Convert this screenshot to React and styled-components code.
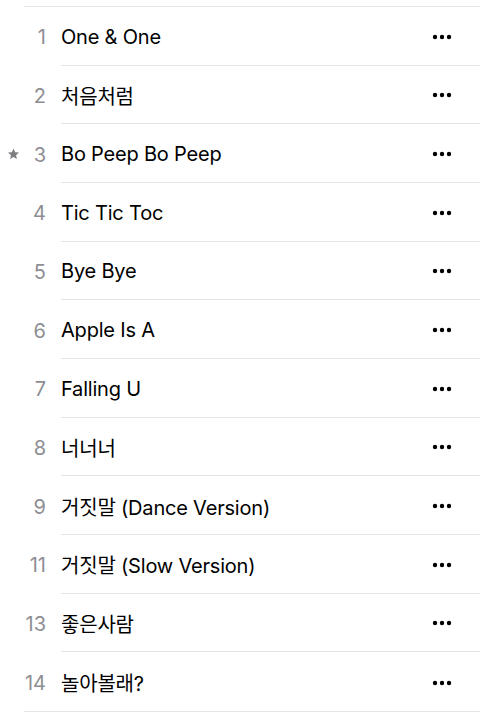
import React from 'react';
import styled, { createGlobalStyle } from 'styled-components';

const tracks = [
    { no: 1, title: "One & One" },
    { no: 2, title: "처음처럼" },
    { no: 3, title: "Bo Peep Bo Peep", starred: true },
    { no: 4, title: "Tic Tic Toc" },
    { no: 5, title: "Bye Bye" },
    { no: 6, title: "Apple Is A" },
    { no: 7, title: "Falling U" },
    { no: 8, title: "너너너" },
    { no: 9, title: "거짓말 (Dance Version)" },
    { no: 11, title: "거짓말 (Slow Version)" },
    { no: 13, title: "좋은사람" },
    { no: 14, title: "놀아볼래?" },
];

function MoreIcon() {
    return (
        <svg width="20" height="6" viewBox="0 0 20 6">
            <circle cx="3" cy="3" r="2.2" fill="#000" />
            <circle cx="10" cy="3" r="2.2" fill="#000" />
            <circle cx="17" cy="3" r="2.2" fill="#000" />
        </svg>
    );
}

function StarIcon() {
    return (
        <svg width="13" height="13" viewBox="0 0 24 24">
            <path d="M12 2l3 6.6 7.1.7-5.4 4.8 1.6 7.1L12 17.5l-6.3 3.7 1.6-7.1-5.4-4.8 7.1-.7z" fill="#7d7d82" />
        </svg>
    );
}

function App() {
    return (
        <React.Fragment>
            <GlobalStyle />
            <List>
                {tracks.map((t, i) => (
                    <Row key={t.no}>
                        {t.starred && <Star><StarIcon /></Star>}
                        <Num>{t.no}</Num>
                        <Main last={i === tracks.length - 1}>
                            <Title>{t.title}</Title>
                            <More><MoreIcon /></More>
                        </Main>
                    </Row>
                ))}
            </List>
        </React.Fragment>
    );
}

export default App;

const GlobalStyle = createGlobalStyle`
    body {
        margin: 0;
        background: #fff;
        font-family: Inter, "Noto Sans CJK KR", sans-serif;
    }
`;

const List = styled.div`
    margin: 6px 0 0 24px;
    border-top: 1px solid #e5e5e5;
    border-bottom: 1px solid #e5e5e5;
`;

const Row = styled.div`
    position: relative;
    display: grid;
    grid-template-columns: 37px 1fr;
    height: 58.67px;
`;

const Star = styled.span`
    position: absolute;
    left: -17px;
    top: 50%;
    transform: translateY(-50%);
    display: flex;
`;

const Num = styled.div`
    display: flex;
    align-items: center;
    justify-content: flex-end;
    padding: 2px 15px 0 0;
    font-size: 20px;
    color: #8e8e93;
`;

const Main = styled.div`
    display: flex;
    align-items: center;
    justify-content: space-between;
    padding: 2px 28px 0 0;
    border-bottom: ${p => (p.last ? "none" : "1px solid #e5e5e5")};
`;

const Title = styled.div`
    font-size: 20px;
    letter-spacing: -0.2px;
    color: #000;
`;

const More = styled.div`
    display: flex;
`;
